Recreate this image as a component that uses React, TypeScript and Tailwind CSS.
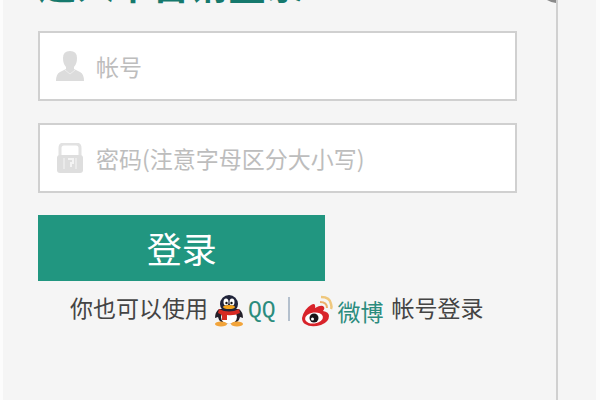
import type { ReactNode } from 'react';

function UserIcon() {
  return (
    <svg viewBox="0 0 28 30" className="h-[30px] w-7 shrink-0" fill="#dcdcdc" aria-hidden="true">
      <path d="M14 0q7 0 7 7 0 6-3 9v2l6 3q4 2 4 9H0q0-7 4-9l6-3v-2q-3-3-3-9 0-7 7-7z" />
      <path d="M9 19l5 4 5-4" fill="none" stroke="#ededed" strokeWidth="1" />
    </svg>
  );
}

function LockIcon() {
  return (
    <svg viewBox="0 0 28 30" className="h-[30px] w-7 shrink-0" aria-hidden="true">
      <path d="M4 13V5q0-4 4-4h12q4 0 4 4v8" fill="none" stroke="#e2e2e2" strokeWidth="3" />
      <rect x="1" y="12" width="26" height="18" rx="3" fill="#dedede" />
      <path d="M8 15v11M20 15v11" fill="none" stroke="#eaeaea" strokeWidth="2" />
      <path d="M12 16h5v4h-2v4" fill="none" stroke="#f4f4f4" strokeWidth="2" />
    </svg>
  );
}

function PenguinIcon() {
  return (
    <svg viewBox="0 0 30 32" className="h-8 w-[30px] shrink-0" aria-hidden="true">
      <path d="M5 14Q1 17 1 23l3-1Q5 29 15 29t11-7l3 1q0-6-4-9z" fill="#24202a" />
      <ellipse cx="15" cy="22" rx="8" ry="7" fill="#fff" />
      <ellipse cx="15" cy="9" rx="9" ry="9" fill="#20243a" />
      <ellipse cx="12" cy="7" rx="2.5" ry="3.5" fill="#fff" />
      <ellipse cx="18" cy="7" rx="2.5" ry="3.5" fill="#fff" />
      <circle cx="12.5" cy="8" r="1.2" fill="#111" />
      <circle cx="17.5" cy="8" r="1.2" fill="#111" />
      <ellipse cx="15" cy="12" rx="6" ry="2" fill="#f5a51d" />
      <path d="M5 14q10 5 20 0l1 4q-6 3-13 2v5H8v-5l-4-2z" fill="#d72a22" />
      <ellipse cx="7" cy="29" rx="6" ry="2.5" fill="#f2a43a" />
      <ellipse cx="23" cy="29" rx="6" ry="2.5" fill="#f2a43a" />
    </svg>
  );
}

function WeiboIcon() {
  return (
    <svg viewBox="0 0 32 32" className="h-8 w-8 shrink-0" aria-hidden="true">
      <path
        d="M0 23Q2 14 9 10q5-3 4 3 7-4 9-1 1 2-1 4 6 1 6 5 0 6-8 9-10 3-16-1-3-2-3-6z"
        fill="#d8232a"
      />
      <ellipse cx="12" cy="23" rx="9" ry="5.5" fill="#fff" transform="rotate(-8 12 23)" />
      <circle cx="12" cy="23" r="4.5" fill="#171317" />
      <circle cx="10.5" cy="24" r="1.5" fill="#fff" />
      <path d="M19 2q9 0 10 7 1 3 0 5" fill="none" stroke="#efc77c" strokeWidth="2.5" />
      <path d="M18 7q7 0 7 6" fill="none" stroke="#ecae6c" strokeWidth="2" />
    </svg>
  );
}

interface FieldProps {
  id: string;
  type: string;
  label: string;
  icon: ReactNode;
}

function Field({ id, type, label, icon }: FieldProps) {
  return (
    <div className="flex h-[70px] items-center gap-3 border-2 border-[#d0d0d0] bg-white px-4">
      <label htmlFor={id} aria-label={label}>
        {icon}
      </label>
      <input
        id={id}
        type={type}
        placeholder={label}
        className="min-w-0 flex-1 bg-transparent text-[23px] leading-8 text-[#555] outline-none placeholder:text-[#bdbdbd]"
      />
    </div>
  );
}

export default function App() {
  return (
    <div className="min-h-screen bg-[#fcfcfc] pr-1 pl-[3px] font-['Noto_Sans_CJK_SC',sans-serif]">
      <main className="flex min-h-screen bg-[#f5f5f5]">
        <section className="min-w-0 flex-1 border-r-2 border-[#d0d0d0] pl-[35px]">
          <header className="flex h-[31px] items-start justify-between overflow-hidden">
            <h1 className="-mt-[42px] text-[38px] leading-[50px] font-bold whitespace-nowrap text-[#16796d]">
              进入平台请登录
            </h1>
            <svg viewBox="0 0 12 4" className="h-1 w-3 shrink-0" aria-hidden="true">
              <path d="M3 0h9v3q-4 0-9-3z" fill="#8a8a8a" />
            </svg>
          </header>
          <div className="pr-[39px]">
            <form onSubmit={(event) => event.preventDefault()}>
              <div className="flex flex-col gap-[22px]">
                <Field id="account" type="text" label="帐号" icon={<UserIcon />} />
                <Field id="password" type="password" label="密码(注意字母区分大小写)" icon={<LockIcon />} />
              </div>
              <button
                type="submit"
                className="mt-[22px] block h-[66px] w-3/5 bg-[#219680] text-[35px] leading-[66px] text-white"
              >
                登录
              </button>
            </form>
            <div className="mt-2.5 flex items-start pl-8 text-[23px] leading-8 whitespace-nowrap text-[#444]">
              <span>你也可以使用</span>
              <a href="#qq" className="mt-1 ml-1.5 flex items-center gap-1 text-[#2b8c7d]">
                <PenguinIcon />
                <span className="font-['Liberation_Mono',monospace]">QQ</span>
              </a>
              <span className="mx-3 mt-1.5 h-6 w-0.5 bg-[#b4c0cd]" />
              <a href="#weibo" className="mt-1 flex items-center gap-1 text-[#2b8c7d]">
                <WeiboIcon />
                <span>微博</span>
              </a>
              <span className="ml-2">帐号登录</span>
            </div>
          </div>
        </section>
        <aside className="w-[38px] shrink-0" />
      </main>
    </div>
  );
}
